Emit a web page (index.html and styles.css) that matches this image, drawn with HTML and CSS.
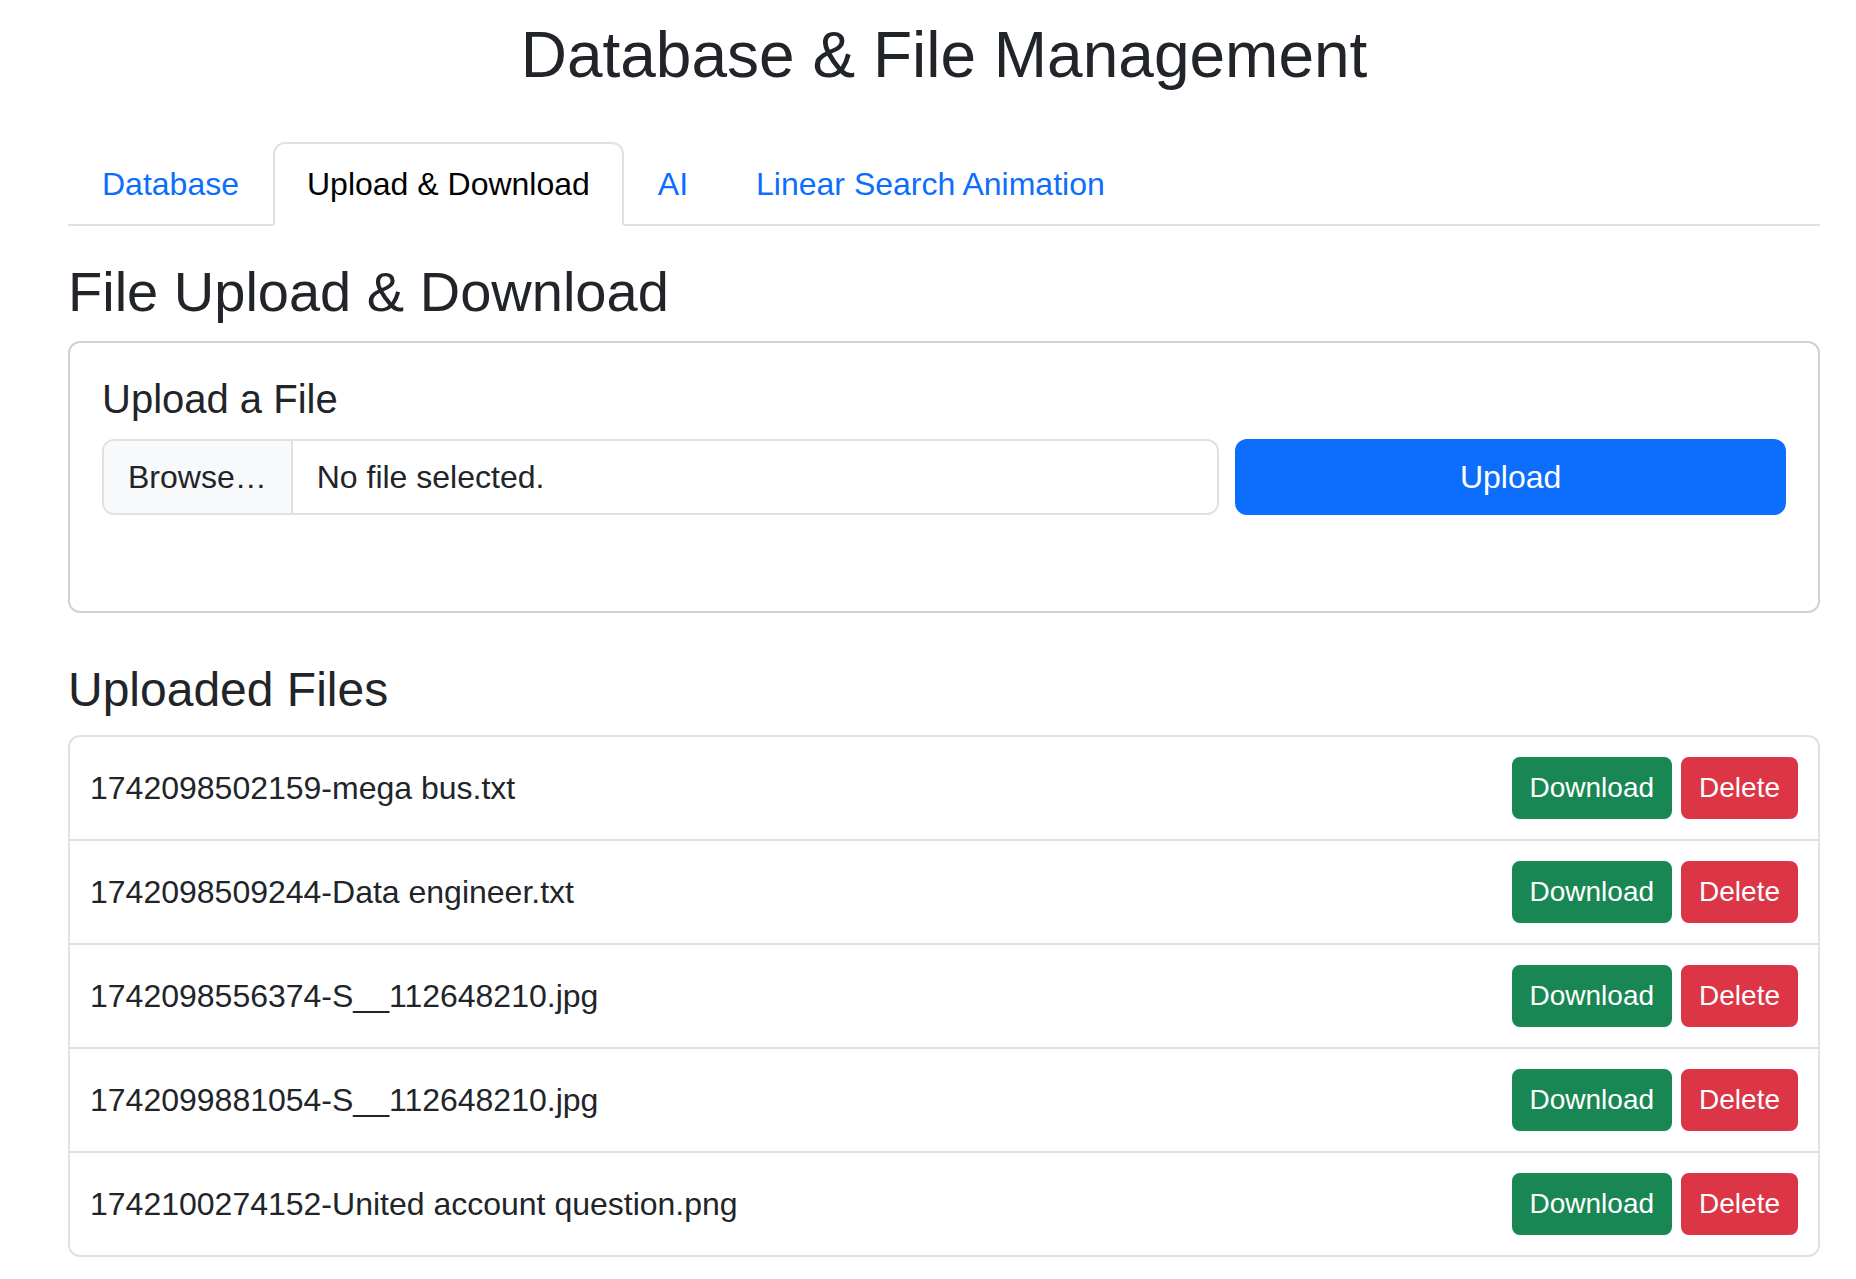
FILE: index.html
```html
<!DOCTYPE html>
<html lang="en">
<head>
  <meta charset="utf-8">
  <meta name="viewport" content="width=device-width, initial-scale=1">
  <title>Database &amp; File Management</title>
  <link rel="stylesheet" href="styles.css">
</head>
<body>
  <main class="page">
    <h1 class="page-title">Database &amp; File Management</h1>

    <nav class="tabs" aria-label="Sections">
      <a class="tab" href="#database">Database</a>
      <a class="tab tab-active" href="#files" aria-current="page">Upload &amp; Download</a>
      <a class="tab" href="#ai">AI</a>
      <a class="tab" href="#linear-search">Linear Search Animation</a>
    </nav>

    <section class="section" id="files">
      <h2 class="section-title">File Upload &amp; Download</h2>
      <form class="upload-card">
        <h3 class="card-title">Upload a File</h3>
        <div class="upload-row">
          <label class="file-field">
            <input class="file-input" type="file" name="file">
            <span class="file-browse">Browse…</span>
            <span class="file-name">No file selected.</span>
          </label>
          <button class="btn btn-primary" type="submit">Upload</button>
        </div>
      </form>
    </section>

    <section class="section uploaded">
      <h2 class="list-title">Uploaded Files</h2>
      <ul class="file-list">
        <li class="file-item">
          <span>1742098502159-mega bus.txt</span>
          <span class="actions"><button class="btn btn-small btn-success" type="button">Download</button><button class="btn btn-small btn-danger" type="button">Delete</button></span>
        </li>
        <li class="file-item">
          <span>1742098509244-Data engineer.txt</span>
          <span class="actions"><button class="btn btn-small btn-success" type="button">Download</button><button class="btn btn-small btn-danger" type="button">Delete</button></span>
        </li>
        <li class="file-item">
          <span>1742098556374-S__112648210.jpg</span>
          <span class="actions"><button class="btn btn-small btn-success" type="button">Download</button><button class="btn btn-small btn-danger" type="button">Delete</button></span>
        </li>
        <li class="file-item">
          <span>1742099881054-S__112648210.jpg</span>
          <span class="actions"><button class="btn btn-small btn-success" type="button">Download</button><button class="btn btn-small btn-danger" type="button">Delete</button></span>
        </li>
        <li class="file-item">
          <span>1742100274152-United account question.png</span>
          <span class="actions"><button class="btn btn-small btn-success" type="button">Download</button><button class="btn btn-small btn-danger" type="button">Delete</button></span>
        </li>
      </ul>
    </section>
  </main>
</body>
</html>
```

FILE: styles.css
```css
* {
  box-sizing: border-box;
}

body {
  margin: 0;
  background: #fff;
  color: #212529;
  font-family: "Liberation Sans", Arial, sans-serif;
  font-size: 32px;
  line-height: 48px;
}

h1,
h2,
h3 {
  margin: 0;
  font-weight: 400;
}

.page {
  padding: 16px 36px 16px 68px;
}

.page-title {
  margin-bottom: 48px;
  font-size: 64px;
  line-height: 78px;
  text-align: center;
}

/* Tabs */
.tabs {
  display: flex;
  box-shadow: inset 0 -2px #dee2e6;
}

.tab {
  padding: 16px 32px;
  border: 2px solid transparent;
  border-radius: 12px 12px 0 0;
  color: #0d6efd;
  text-decoration: none;
}

.tab-active {
  border-color: #dee2e6 #dee2e6 #fff;
  background: #fff;
  color: #000;
}

/* Sections */
.section {
  margin-top: 32px;
}

.uploaded {
  margin-top: 48px;
}

.section-title {
  margin-bottom: 16px;
  font-size: 56px;
  line-height: 67px;
}

.list-title {
  margin-bottom: 16px;
  font-size: 48px;
  line-height: 58px;
}

/* Upload card */
.upload-card {
  padding: 32px 32px 96px;
  border: 2px solid #d0d1d2;
  border-radius: 12px;
}

.card-title {
  margin-bottom: 16px;
  font-size: 40px;
  line-height: 48px;
}

.upload-row {
  display: grid;
  grid-template-columns: repeat(3, 1fr);
  gap: 16px;
}

.file-field {
  position: relative;
  display: flex;
  grid-column: span 2;
  overflow: hidden;
  border: 2px solid #dee2e6;
  border-radius: 12px;
}

/* The native control covers the field and takes the clicks */
.file-input {
  position: absolute;
  inset: 0;
  width: 100%;
  opacity: 0;
  cursor: pointer;
}

.file-browse {
  padding: 12px 24px;
  border-right: 2px solid #dee2e6;
  background: #f8f9fa;
}

.file-name {
  padding: 12px 24px;
}

/* Buttons */
.btn {
  padding: 12px 24px;
  border: 2px solid transparent;
  border-radius: 12px;
  color: #fff;
  font: inherit;
  cursor: pointer;
}

.btn-small {
  padding: 8px 16px;
  border-radius: 8px;
  font-size: 28px;
  line-height: 42px;
}

.btn-primary {
  border-color: #0d6efd;
  background: #0d6efd;
}

.btn-success {
  border-color: #198754;
  background: #198754;
}

.btn-danger {
  border-color: #dc3545;
  background: #dc3545;
}

/* File list */
.file-list {
  margin: 0;
  padding: 0;
  border: 2px solid #dee2e6;
  border-bottom-color: #dfdfdf;
  border-radius: 12px;
  list-style: none;
}

.file-item {
  display: flex;
  align-items: center;
  justify-content: space-between;
  padding: 20px;
}

.file-item + .file-item {
  border-top: 2px solid #dfdfdf;
}

.actions {
  display: flex;
  gap: 9px;
}
```
